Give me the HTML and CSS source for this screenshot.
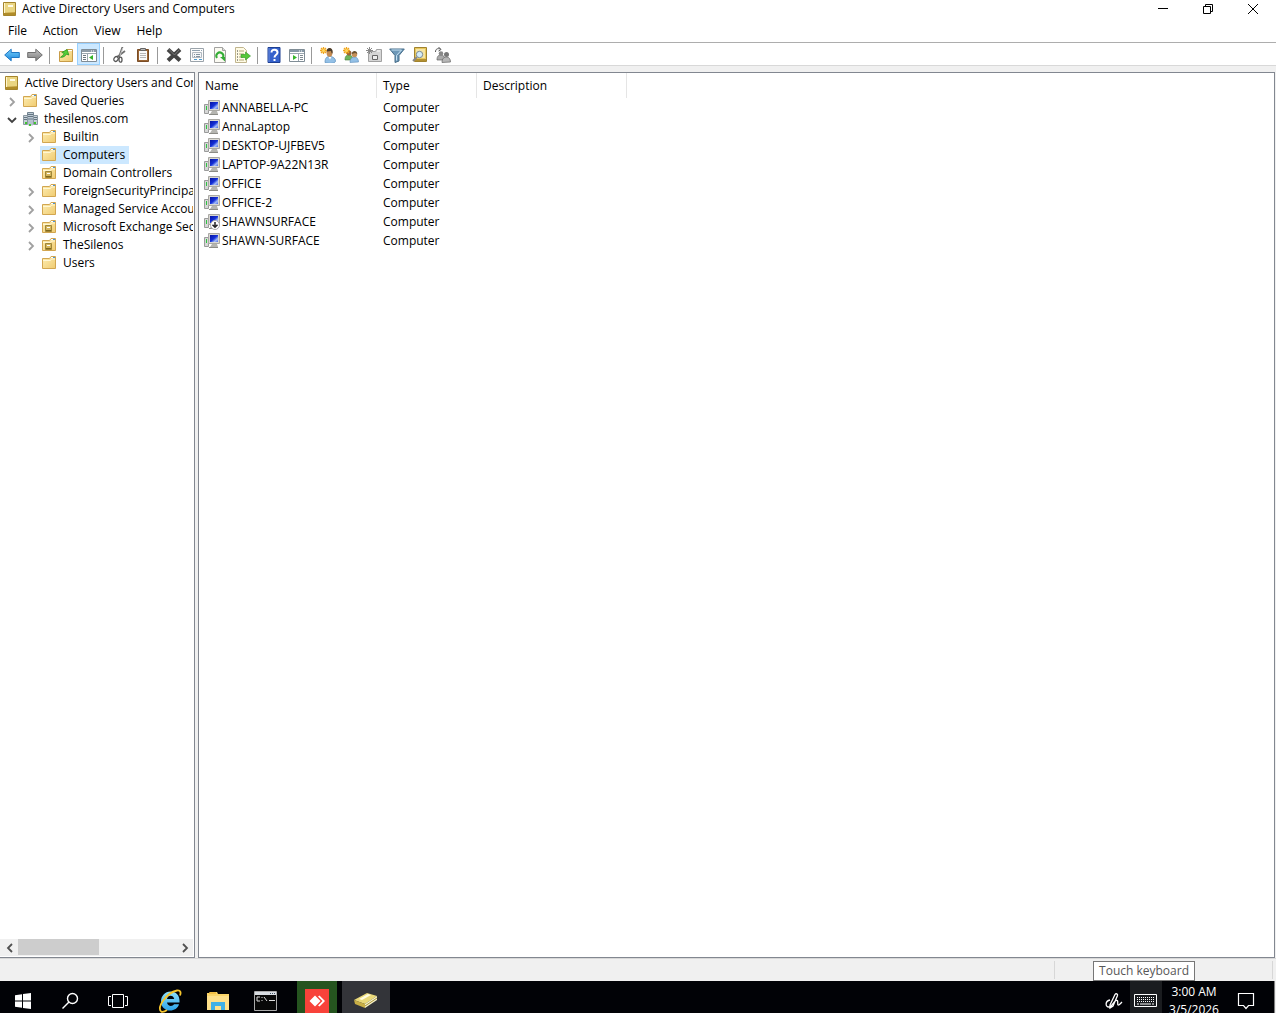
FILE: index.html
```html
<!DOCTYPE html>
<html lang="en">
<head>
<meta charset="utf-8">
<title>Active Directory Users and Computers</title>
<link rel="stylesheet" href="styles.css">
</head>
<body>
<svg class="sprite" width="0" height="0" aria-hidden="true">
  <defs>
    <linearGradient id="g-gold" x1="0" y1="0" x2="1" y2="1"><stop offset="0" stop-color="#fff0b0"/><stop offset="1" stop-color="#b8922a"/></linearGradient>
    <linearGradient id="g-folder" x1="0" y1="0" x2="1" y2="1"><stop offset="0" stop-color="#fdeeb4"/><stop offset="1" stop-color="#f0cb70"/></linearGradient>
    <linearGradient id="g-blue" x1="0" y1="0" x2="0" y2="1"><stop offset="0" stop-color="#7ad0fa"/><stop offset="1" stop-color="#1a86dc"/></linearGradient>
    <linearGradient id="g-gray" x1="0" y1="0" x2="0" y2="1"><stop offset="0" stop-color="#c4c4c4"/><stop offset="1" stop-color="#7a7a7a"/></linearGradient>
    <linearGradient id="g-screen" x1="0" y1="0" x2="1" y2="1"><stop offset="0" stop-color="#0614a0"/><stop offset=".5" stop-color="#1430d8"/><stop offset=".75" stop-color="#a4bcf8"/><stop offset="1" stop-color="#4a6ae4"/></linearGradient>
    <linearGradient id="g-ie" x1="0" y1="0" x2="0" y2="1"><stop offset="0" stop-color="#8ee0fb"/><stop offset="1" stop-color="#2ba4ea"/></linearGradient>
  </defs>
  <symbol id="i-book" viewBox="0 0 16 16"><path d="M2.500 1.500h12v13h-12z" fill="url(#g-gold)" stroke="#a5842c"/><path d="M4 2h10v9H4z" fill="#ead582"/><path d="M7 4h5v2H7z" fill="#fffbe6"/><path d="M3 12h11v2H3z" fill="#b08c28"/><path d="M3.500 2v10" stroke="#fff6cc"/></symbol>
  <symbol id="i-folder" viewBox="0 0 16 16"><path d="M1.500 13.500v-10h7l1.500-2h4.500v12z" fill="url(#g-folder)" stroke="#d2a650"/><path d="M10 2.500h4" stroke="#fff"/><path d="M12 2.500h2" stroke="#4a94d8"/><path d="M2 5.500h7.500l1-1.500h3.500" fill="none" stroke="#fff7d4"/></symbol>
  <symbol id="i-ou" viewBox="0 0 16 16"><use href="#i-folder"/><path d="M4.500 6.500h6v6h-6z" fill="#d5b65c" stroke="#a08638"/><path d="M6 8h3v1H6z" fill="#fff"/><path d="M5 11h5v1H5z" fill="#80681c"/></symbol>
  <symbol id="i-domain" viewBox="0 0 16 16"><path d="M5.500 1.500h6v11h-6z" fill="#bcc9d4" stroke="#748490"/><path d="M1.500 4.500h4v9h-4zM11.500 4.500h4v9h-4z" fill="#c7d1d8" stroke="#8b98a2"/><path d="M6 3.500h5M6 5.500h5M2 6.500h3M2 8.500h3M12 6.500h3M12 8.500h3M6 8h5" stroke="#647582"/><path d="M6 9.500h5v5H6z" fill="#b4c2cc"/><path d="M3 11h2v2H3zM7 13h2v2H7zM12 11h2v2h-2z" fill="#40c52e"/></symbol>
  <symbol id="i-pc" viewBox="0 0 16 16"><path d="M.5 4.500h4v9h-4z" fill="#d6d7d6" stroke="#9a9b9b"/><path d="M2 6h1v4H2z" fill="#2fc341"/><path d="M4.500.5h11v10h-11z" fill="#d9d8d2" stroke="#aaa9a4"/><path d="M6 2h8v7H6z" fill="url(#g-screen)"/><path d="M8 11h5l1 3H6z" fill="#b5b5b0"/><path d="M5 14.500h9" stroke="#8c8c86"/></symbol>
  <symbol id="i-pcoff" viewBox="0 0 16 16"><use href="#i-pc"/><circle cx="11" cy="11" r="4.500" fill="#fff" stroke="#aaa"/><path d="M11 8v5M8.500 10.800l2.500 2.500 2.500-2.500" fill="none" stroke="#222" stroke-width="1.500"/></symbol>
  <symbol id="i-back" viewBox="0 0 16 16"><path d="M.7 8l6.500-5.800V5.500h8.100v5H7.200v3.300z" fill="url(#g-blue)" stroke="#1f78c4"/></symbol>
  <symbol id="i-fwd" viewBox="0 0 16 16"><path d="M15.300 8L8.800 2.200V5.500H.7v5h8.100v3.300z" fill="url(#g-gray)" stroke="#707070"/></symbol>
  <symbol id="i-up" viewBox="0 0 16 16"><path d="M1.500 14.500v-10h6l1-2h6v12z" fill="url(#g-folder)" stroke="#c89c48"/><path d="M10 3.500h4" stroke="#fff"/><path d="M4 12c3-1 4-3 4.500-5h2.500L7.500 2.500 3.500 7H6c0 2-1 3-2 5z" fill="#55ce3b" stroke="#2b951f" stroke-width=".7" transform="rotate(20 8 7)"/></symbol>
  <symbol id="i-tree" viewBox="0 0 16 16"><path d="M.5 2.500h15v12H.5z" fill="#fff" stroke="#7f8c96"/><path d="M1 3h14v2H1z" fill="#8d9ca8"/><path d="M10 4h1M12 4h1" stroke="#fff"/><path d="M1 6.500h14M6.500 7v7" stroke="#9ba7b0"/><path d="M2 8.500h3M2 10.500h3M2 12.500h3" stroke="#6b7780"/><path d="M12 8v5l-4-2.500z" fill="#35b52a"/></symbol>
  <symbol id="i-cut" viewBox="0 0 16 16"><path d="M10.500 0L7 10M13 4L5 10" stroke="#707070" stroke-width="1.800"/><path d="M10.800 1L8 8.500" stroke="#e5e5e5" stroke-width=".7"/><ellipse cx="4" cy="12" rx="2" ry="2.500" transform="rotate(35 4 12)" fill="none" stroke="#555" stroke-width="1.300"/><ellipse cx="8.500" cy="12.700" rx="1.500" ry="2.500" fill="none" stroke="#555" stroke-width="1.300"/></symbol>
  <symbol id="i-paste" viewBox="0 0 16 16"><path d="M2.500 2.500h11v12h-11z" fill="#9a6534" stroke="#7a4d26"/><path d="M4 4h8v9H4z" fill="#fafafa"/><path d="M5 6.500h6M5 8.500h6M5 10.500h6" stroke="#b7b7b7"/><path d="M5.500 1.500h5v2h-5z" fill="#bbb" stroke="#666"/></symbol>
  <symbol id="i-del" viewBox="0 0 16 16"><path d="M2 2.500l12 11M14 2.500l-12 11" stroke="#444" stroke-width="4"/><path d="M2.500 2l6 6 5-5.500" fill="none" stroke="#777"/></symbol>
  <symbol id="i-prop" viewBox="0 0 16 16"><path d="M1.500 1.500h13v13h-13z" fill="#fcfcfc" stroke="#9aa3aa"/><path d="M3 3.500h8M12 3.500h1" stroke="#8fa1af"/><path d="M3.500 5.500h9v5h-9z" fill="#f4f6f8" stroke="#b0b8c0"/><path d="M5 7.500h1M7 7.500h4M5 9.500h1M7 9.500h4" stroke="#8494a0"/><path d="M5 12h3v1H5zM10 12h3v1h-3z" fill="#4a9bd0"/></symbol>
  <symbol id="i-page" viewBox="0 0 16 16"><path d="M2.500.5h8l3 3v12h-11z" fill="#fbfaf2" stroke="#a2a2a0"/><path d="M10.500.5v3h3" fill="#ddd" stroke="#a2a2a0"/></symbol>
  <symbol id="i-refresh" viewBox="0 0 16 16"><use href="#i-page"/><path d="M5 11A3.500 3.500 0 1 1 11 10.500" fill="none" stroke="#34ad36" stroke-width="2"/><path d="M8 10h5v4.500z" fill="#34ad36"/></symbol>
  <symbol id="i-export" viewBox="0 0 16 16"><path d="M.5.500h8l3 3v12H.5z" fill="#fffbe5" stroke="#c0b58e"/><path d="M2 4h1M2 7h1M2 10h1M2 13h1" stroke="#333"/><path d="M4 4h5M4 7h5M4 10h4M4 13h5" stroke="#b2a77d"/><path d="M6 7.500h4.500V5l5 4-5 4v-2.500H6z" fill="#55c838" stroke="#2f9424" stroke-width=".6"/></symbol>
  <symbol id="i-help" viewBox="0 0 16 16"><path d="M2 .5h12v15H2z" fill="#3461cc" stroke="#1d3f91"/><path d="M3 1v14" stroke="#6b8cdc"/><path d="M5.500 5.500c0-4 6-3.500 6 0 0 2.500-3 2-3 5" fill="none" stroke="#fff" stroke-width="2"/><path d="M7.500 12h2v2h-2z" fill="#fff"/></symbol>
  <symbol id="i-pane" viewBox="0 0 16 16"><path d="M.5 2.500h15v12H.5z" fill="#fff" stroke="#808d96"/><path d="M1 3h14v2H1z" fill="#8698a7"/><path d="M10 4h1M12 4h1" stroke="#fff"/><path d="M1 6.500h14M9.500 7v7" stroke="#9ba7b0"/><path d="M11 8.500h3M11 10.500h3M11 12.500h3" stroke="#7d8990"/><path d="M4 8v5l4-2.500z" fill="#35b52a"/></symbol>
  <symbol id="i-star" viewBox="0 0 16 16"><path d="M3.500 0v7M0 3.500h7M1 1l5 5M6 1L1 6" stroke="#f0a51d" stroke-width="1.300"/><circle cx="3.500" cy="3.500" r="1.500" fill="#ffd860"/></symbol>
  <symbol id="i-user" viewBox="0 0 16 16"><path d="M5 15.500c0-5 2-6 5-6s5.500 2 5.500 4.500-6 3-10.500 1.500z" fill="#93c0e6" stroke="#5a8cba" stroke-width=".7"/><ellipse cx="9.500" cy="5.500" rx="3" ry="4.200" fill="#c58b50"/><path d="M6.500 4.500C6.500 0 12.800-.5 12.600 5c0 2.500-1 2-1.600-1z" fill="#4a3c2b"/><path d="M8.500 10l1.500 2.500 1.500-2.500" fill="#fff"/><use href="#i-star"/></symbol>
  <symbol id="i-group" viewBox="0 0 16 16"><path d="M2 13c0-4 1.500-5 4-5s4 2 4 5z" fill="#6eb45b" stroke="#477e3d" stroke-width=".6"/><circle cx="6" cy="6" r="2.500" fill="#9a6537"/><path d="M7 15.500c0-4 2-5.500 4.500-5.500s4 2 4 5z" fill="#93c0e6" stroke="#5a8cba" stroke-width=".6"/><circle cx="11.500" cy="7.500" r="2.700" fill="#c69058"/><path d="M8.800 7c0-4 5.500-4 5.500 0l-2-1z" fill="#6b5230"/><use href="#i-star"/></symbol>
  <symbol id="i-newou" viewBox="0 0 16 16"><path d="M2.500 14.500v-10h7l1-2h5v12z" fill="#d6d6d6" stroke="#a1a1a1"/><path d="M6.500 8.500h5v4h-5z" fill="#eee" stroke="#666"/><path d="M11 4h3" stroke="#fff"/><path d="M3.500 0v7M0 3.500h7M1 1l5 5M6 1L1 6" stroke="#888"/></symbol>
  <symbol id="i-filter" viewBox="0 0 16 16"><path d="M.7 2h14.600L10 8.500V14l-4 1.500v-7z" fill="#6d98b8" stroke="#466d89"/><path d="M2.500 3h10L7.500 8.500v5" fill="none" stroke="#c6e1f2"/></symbol>
  <symbol id="i-find" viewBox="0 0 16 16"><path d="M2.500.5h12v14h-12z" fill="#e8c85e" stroke="#a1832e"/><path d="M4 2h9v9H4z" fill="#f5e5a5"/><path d="M3 12h11v2H3z" fill="#b39031"/><path d="M1 14l4-4" stroke="#888" stroke-width="2"/><circle cx="7.500" cy="7.500" r="3.200" fill="#d5edf8" stroke="#7b8992"/></symbol>
  <symbol id="i-addgrp" viewBox="0 0 16 16"><path d="M2 13c0-4 1.500-5 4-5s4 2 4 5z" fill="#aaa" stroke="#666" stroke-width=".7"/><circle cx="6" cy="6.500" r="2.300" fill="#888"/><path d="M7 15.500c0-4 2-5.500 4.500-5.500s4 2 4 5z" fill="#b7b7b7" stroke="#666" stroke-width=".7"/><circle cx="11.500" cy="7.500" r="2.500" fill="#777"/><path d="M.5 5c0-3 2-4 5-3M3.500 0L6 2.500 3.500 4" fill="none" stroke="#555"/></symbol>
  <symbol id="i-right" viewBox="0 0 16 16"><path d="M6 4l4 4-4 4" fill="none" stroke="currentColor" stroke-width="1.800"/></symbol>
  <symbol id="i-left" viewBox="0 0 16 16"><path d="M10 4L6 8l4 4" fill="none" stroke="currentColor" stroke-width="1.800"/></symbol>
  <symbol id="i-down" viewBox="0 0 16 16"><path d="M4 6l4 4 4-4" fill="none" stroke="#404040" stroke-width="1.800"/></symbol>
</svg>

<header class="titlebar">
  <svg class="icon"><use href="#i-book"/></svg>
  <h1 class="title">Active Directory Users and Computers</h1>
  <button class="winbtn" aria-label="Minimize"><svg class="glyph" viewBox="0 0 12 12"><path d="M1 5.500h10"/></svg></button>
  <button class="winbtn" aria-label="Restore"><svg class="glyph" viewBox="0 0 12 12"><path d="M1.500 3.500h7v7h-7zM3.500 3V1.500h7v7H9"/></svg></button>
  <button class="winbtn" aria-label="Close"><svg class="glyph" viewBox="0 0 12 12"><path d="M1 1l10 10M11 1L1 11"/></svg></button>
</header>

<nav class="menubar">
  <button class="menu">File</button>
  <button class="menu">Action</button>
  <button class="menu">View</button>
  <button class="menu">Help</button>
</nav>

<div class="toolbar" role="toolbar" aria-label="Standard">
  <button class="tool" aria-label="Back"><svg class="icon"><use href="#i-back"/></svg></button>
  <button class="tool" aria-label="Forward"><svg class="icon"><use href="#i-fwd"/></svg></button>
  <span class="sep"></span>
  <button class="tool" aria-label="Up one level"><svg class="icon"><use href="#i-up"/></svg></button>
  <button class="tool pressed" aria-label="Show or hide console tree" aria-pressed="true"><svg class="icon"><use href="#i-tree"/></svg></button>
  <span class="sep"></span>
  <button class="tool" aria-label="Cut"><svg class="icon"><use href="#i-cut"/></svg></button>
  <button class="tool" aria-label="Paste"><svg class="icon"><use href="#i-paste"/></svg></button>
  <span class="sep"></span>
  <button class="tool" aria-label="Delete"><svg class="icon"><use href="#i-del"/></svg></button>
  <button class="tool" aria-label="Properties"><svg class="icon"><use href="#i-prop"/></svg></button>
  <button class="tool" aria-label="Refresh"><svg class="icon"><use href="#i-refresh"/></svg></button>
  <button class="tool" aria-label="Export list"><svg class="icon"><use href="#i-export"/></svg></button>
  <span class="sep"></span>
  <button class="tool" aria-label="Help"><svg class="icon"><use href="#i-help"/></svg></button>
  <button class="tool" aria-label="Show or hide action pane"><svg class="icon"><use href="#i-pane"/></svg></button>
  <span class="sep"></span>
  <button class="tool" aria-label="New user"><svg class="icon"><use href="#i-user"/></svg></button>
  <button class="tool" aria-label="New group"><svg class="icon"><use href="#i-group"/></svg></button>
  <button class="tool" aria-label="New organizational unit"><svg class="icon"><use href="#i-newou"/></svg></button>
  <button class="tool" aria-label="Filter"><svg class="icon"><use href="#i-filter"/></svg></button>
  <button class="tool" aria-label="Find"><svg class="icon"><use href="#i-find"/></svg></button>
  <button class="tool" aria-label="Add to group"><svg class="icon"><use href="#i-addgrp"/></svg></button>
</div>

<main class="panes">
  <section class="treepane" aria-label="Console tree">
    <ul class="tree">
      <li>
        <div class="node"><span class="item"><svg class="icon"><use href="#i-book"/></svg>Active Directory Users and Computers</span></div>
        <ul class="branch first">
          <li><div class="node"><button class="twist" aria-label="Expand"><svg class="icon"><use href="#i-right"/></svg></button><span class="item"><svg class="icon"><use href="#i-folder"/></svg>Saved Queries</span></div></li>
          <li>
            <div class="node"><button class="twist" aria-label="Collapse"><svg class="icon"><use href="#i-down"/></svg></button><span class="item"><svg class="icon"><use href="#i-domain"/></svg>thesilenos.com</span></div>
            <ul class="branch">
              <li><div class="node"><button class="twist" aria-label="Expand"><svg class="icon"><use href="#i-right"/></svg></button><span class="item"><svg class="icon"><use href="#i-folder"/></svg>Builtin</span></div></li>
              <li><div class="node"><span class="twist"></span><span class="item selected"><svg class="icon"><use href="#i-folder"/></svg>Computers</span></div></li>
              <li><div class="node"><span class="twist"></span><span class="item"><svg class="icon"><use href="#i-ou"/></svg>Domain Controllers</span></div></li>
              <li><div class="node"><button class="twist" aria-label="Expand"><svg class="icon"><use href="#i-right"/></svg></button><span class="item"><svg class="icon"><use href="#i-folder"/></svg>ForeignSecurityPrincipals</span></div></li>
              <li><div class="node"><button class="twist" aria-label="Expand"><svg class="icon"><use href="#i-right"/></svg></button><span class="item"><svg class="icon"><use href="#i-folder"/></svg>Managed Service Accounts</span></div></li>
              <li><div class="node"><button class="twist" aria-label="Expand"><svg class="icon"><use href="#i-right"/></svg></button><span class="item"><svg class="icon"><use href="#i-ou"/></svg>Microsoft Exchange Security Groups</span></div></li>
              <li><div class="node"><button class="twist" aria-label="Expand"><svg class="icon"><use href="#i-right"/></svg></button><span class="item"><svg class="icon"><use href="#i-ou"/></svg>TheSilenos</span></div></li>
              <li><div class="node"><span class="twist"></span><span class="item"><svg class="icon"><use href="#i-folder"/></svg>Users</span></div></li>
            </ul>
          </li>
        </ul>
      </li>
    </ul>
    <div class="scrollbar">
      <button class="arrow" aria-label="Scroll left"><svg class="icon"><use href="#i-left"/></svg></button>
      <div class="track"><div class="thumb"></div></div>
      <button class="arrow" aria-label="Scroll right"><svg class="icon"><use href="#i-right"/></svg></button>
    </div>
  </section>

  <section class="listpane" aria-label="Objects">
    <table class="list">
      <colgroup><col class="c-name"><col class="c-type"><col class="c-desc"><col></colgroup>
      <thead><tr><th>Name</th><th>Type</th><th>Description</th><td></td></tr></thead>
      <tbody>
        <tr><td><span class="object"><svg class="icon"><use href="#i-pc"/></svg>ANNABELLA-PC</span></td><td>Computer</td><td></td><td></td></tr>
        <tr><td><span class="object"><svg class="icon"><use href="#i-pc"/></svg>AnnaLaptop</span></td><td>Computer</td><td></td><td></td></tr>
        <tr><td><span class="object"><svg class="icon"><use href="#i-pc"/></svg>DESKTOP-UJFBEV5</span></td><td>Computer</td><td></td><td></td></tr>
        <tr><td><span class="object"><svg class="icon"><use href="#i-pc"/></svg>LAPTOP-9A22N13R</span></td><td>Computer</td><td></td><td></td></tr>
        <tr><td><span class="object"><svg class="icon"><use href="#i-pc"/></svg>OFFICE</span></td><td>Computer</td><td></td><td></td></tr>
        <tr><td><span class="object"><svg class="icon"><use href="#i-pc"/></svg>OFFICE-2</span></td><td>Computer</td><td></td><td></td></tr>
        <tr><td><span class="object"><svg class="icon"><use href="#i-pcoff"/></svg>SHAWNSURFACE</span></td><td>Computer</td><td></td><td></td></tr>
        <tr><td><span class="object"><svg class="icon"><use href="#i-pc"/></svg>SHAWN-SURFACE</span></td><td>Computer</td><td></td><td></td></tr>
      </tbody>
    </table>
  </section>
</main>

<div class="statusbar"><span class="cell grow"></span><span class="cell mid"></span><span class="cell last"></span></div>

<footer class="taskbar">
  <button class="task start" aria-label="Start"><svg width="16" height="16" viewBox="0 0 16 16"><path d="M0 2.200L7 1.200v6.300H0zM8 1l8-1v7.500H8zM0 8.500h7v6.300l-7-1zM8 8.500h8V16l-8-1z" fill="#fff"/></svg></button>
  <button class="task" aria-label="Search"><svg width="18" height="18" viewBox="0 0 18 18" fill="none" stroke="#fff" stroke-width="1.400"><circle cx="11.500" cy="6.500" r="5"/><path d="M8 10l-6.500 6.500"/></svg></button>
  <button class="task" aria-label="Task view"><svg width="20" height="16" viewBox="0 0 20 16" fill="none" stroke="#fff"><path d="M4.500 1.500h11v13h-11zM3 3.500H.5v9H3M17 3.500h2.500v9H17"/></svg></button>
  <button class="task app" aria-label="Internet Explorer"><svg width="24" height="24" viewBox="0 0 24 24"><path d="M12.500 2.500c6 0 9.500 4.500 9 11H9c.5 4 5.500 4.500 7 1.800h5C18.500 24.500 3 23.500 3 12.500c0-5.500 4-10 9.500-10zM9 10h7.200c-.5-4.500-6.700-4.500-7.200 0z" fill="url(#g-ie)"/><path d="M3 22.500C-1 18 8 4 19 1.500c4-.5 4 2.500 3 5M3 22.500c1.500 1 4 0 6-1.500" fill="none" stroke="#f5c42c" stroke-width="1.800"/></svg></button>
  <button class="task" aria-label="File Explorer"><svg width="22" height="20" viewBox="0 0 22 20"><path d="M0 19V2h2l1-1h7l1 2h11v16z" fill="#fbd568"/><path d="M0 5h22v14H0z" fill="#fee08a"/><path d="M4 19v-8h14v8h-4v-4H8v4z" fill="#3fb0e6"/><path d="M2 2h7" stroke="#e8a820"/></svg></button>
  <button class="task" aria-label="Command Prompt"><svg width="24" height="20" viewBox="0 0 24 20"><path d="M.5.500h22v19H.5z" fill="#080808" stroke="#aaa"/><path d="M1 1h21v3H1z" fill="#d9dde2"/><path d="M16 2.500h1M18 2.500h1M20 2.500h1" stroke="#456"/><path d="M6 6H3v4h3M8 6v1M8 9v1M10 6l3 4M15 9.500h6" fill="none" stroke="#ddd"/></svg></button>
  <button class="task anydesk" aria-label="AnyDesk"><svg width="24" height="24" viewBox="0 0 24 24"><path d="M0 0h24v24H0z" fill="#f8423a"/><path d="M4.500 12L10 6.500l5.500 5.500-5.500 5.500zM13 7.500L14.500 6.500 20 12l-5.500 5.500-1.500-1L17.500 12z" fill="#fff"/></svg></button>
  <button class="task active" aria-label="Active Directory Users and Computers"><svg width="26" height="20" viewBox="0 0 26 20"><path d="M1 9L14 2l10 3-12 8z" fill="#e9d878"/><path d="M1 9l11 4v4L2 13z" fill="#c8ae45"/><path d="M12 13l12-8v4l-12 8z" fill="#f7f2c8"/><path d="M12 15l12-8" stroke="#a89038"/><path d="M6 8l9-5 3 1-9 5z" fill="#fffce0"/></svg></button>
  <span class="spacer"></span>
  <button class="tray" aria-label="Windows Ink"><svg width="18" height="18" viewBox="0 0 18 18" fill="none" stroke="#fff" stroke-width="1.300"><path d="M5 13L10 2.500c1-1.500 3-.5 2.500 1L8 14l-3 2zM5 8c-5 1-5 7-1 7 3 0 4-5 7-6.500 3-1 1 4 2 4.500s2-1 4-3"/></svg></button>
  <div class="traykey">
    <button class="tray hover" aria-label="Touch keyboard"><svg width="24" height="14" viewBox="0 0 24 14" fill="none" stroke="#fff"><path d="M.5.500h22v12H.5z"/><path d="M3 3.500h17M3 5.500h17M3 7.500h17" stroke-dasharray="1 1"/><path d="M3 10h2M6 10h11M18 10h2"/></svg></button>
    <div class="tooltip" role="tooltip">Touch keyboard</div>
  </div>
  <div class="clock"><span>3:00 AM</span><span>3/5/2026</span></div>
  <button class="tray notes" aria-label="Notifications"><svg width="18" height="18" viewBox="0 0 18 18" fill="none" stroke="#fff" stroke-width="1.200"><path d="M1.500 1.500h15v12h-5L9 16.500l-2.500-3h-5z"/></svg></button>
</footer>
</body>
</html>
```
FILE: styles.css
```css
* { box-sizing: border-box; }

body {
  display: flex;
  flex-direction: column;
  height: 100vh;
  margin: 0;
  overflow: hidden;
  background: #f0f0f0;
  color: #000;
  font: 12px/18px "Open Sans", "Noto Sans", sans-serif;
}

button {
  display: flex;
  align-items: center;
  justify-content: center;
  flex: none;
  margin: 0;
  padding: 0;
  border: 0;
  background: none;
  color: inherit;
  font: inherit;
}

ul { margin: 0; padding: 0; list-style: none; }

.sprite { position: absolute; }
.icon { display: block; flex: none; width: 16px; height: 16px; }

/* Window frame */
.titlebar {
  display: flex;
  align-items: center;
  flex: none;
  height: 18px;
  padding-right: 1px;
  background: #fff;
}
.titlebar .icon { margin: 0 5px 0 1px; }
.title { flex: 1; margin: 0; font-size: 12px; font-weight: 400; }
.winbtn { width: 45px; height: 16px; }
.glyph { width: 12px; height: 12px; fill: none; stroke: #000; }

.menubar {
  display: flex;
  flex: none;
  height: 24px;
  padding-top: 2px;
  background: #fff;
}
.menu { padding: 0 8px; }

.toolbar {
  display: flex;
  flex: none;
  height: 24px;
  border-top: 1px solid #adadad;
  border-bottom: 1px solid #d8d8d8;
  background: #fff;
}
.tool { width: 23px; height: 22px; padding-top: 2px; }
.pressed { border: 1px solid #99d1ff; background: #cce8ff; }
.sep { width: 8px; margin: 4px 0 1px; background: linear-gradient(#999, #999) 3px 0 / 1px 100% no-repeat; }

/* Panes */
.panes {
  display: flex;
  flex: 1;
  gap: 3px;
  min-height: 0;
  padding: 6px 1px 0 0;
}
.treepane {
  display: flex;
  flex-direction: column;
  flex: none;
  width: 195px;
  padding: 1px 1px 1px 0;
  border: 1px solid #828790;
  border-left: 0;
  background: #fff;
}
.tree { flex: 1; padding-left: 2px; overflow: hidden; }
.branch { padding-left: 19px; }
.branch.first { padding-left: 0; }
.node { display: flex; height: 18px; }
.twist { display: flex; justify-content: center; flex: none; width: 19px; padding-top: 2px; color: #a0a0a0; }
.item {
  display: flex;
  align-items: center;
  gap: 6px;
  padding: 0 4px 0 1px;
  white-space: nowrap;
}
.selected { background: #cce8ff; }

.scrollbar { display: flex; flex: none; height: 17px; padding-left: 1px; background: #f0f0f0; }
.arrow { width: 17px; color: #505050; }
.track { flex: 1; }
.thumb { width: 51%; height: 16px; background: #cdcdcd; }

.listpane { flex: 1; min-width: 0; border: 1px solid #828790; background: #fff; }
.list { width: 100%; border-spacing: 0; table-layout: fixed; }
.c-name { width: 178px; }
.c-type { width: 100px; }
.c-desc { width: 150px; }
.list th {
  height: 25px;
  padding: 0 6px;
  border-right: 1px solid #e5e5e5;
  font-weight: 400;
  text-align: left;
}
.list td { height: 19px; padding: 0 6px; }
.object { display: flex; align-items: center; gap: 2px; margin-left: -1px; }

.statusbar { display: flex; flex: none; height: 23px; padding: 2px 3px 2px 0; border-top: 1px solid #d8d8d8; }
.cell { border-right: 1px solid #d7d7d7; }
.grow { flex: 1; }
.mid { width: 133px; }
.last { width: 85px; }

/* Taskbar, with its lower edge beyond the window */
.taskbar {
  display: flex;
  flex: none;
  height: 32px;
  margin-right: 1px;
  border-right: 1px solid #808080;
  background: #010206;
  color: #fff;
}
.task { width: 48px; height: 40px; }
.start { width: 46px; }
.app { margin-left: 4px; }
.anydesk { width: 40px; margin: 0 5px 0 7px; background: #25541f; }
.active { background: #333439; }
.spacer { flex: 1; }
.tray { width: 32px; height: 40px; }
.hover { background: #1a1c1f; }
.traykey { position: relative; }
.clock {
  display: flex;
  flex-direction: column;
  align-items: center;
  width: 64px;
  padding-top: 2px;
}
.notes { width: 40px; margin-right: 8px; }
.tooltip {
  position: absolute;
  right: -33px;
  bottom: 100%;
  padding: 0 5px;
  border: 1px solid #767676;
  background: #fff;
  color: #575757;
  white-space: nowrap;
}
```
